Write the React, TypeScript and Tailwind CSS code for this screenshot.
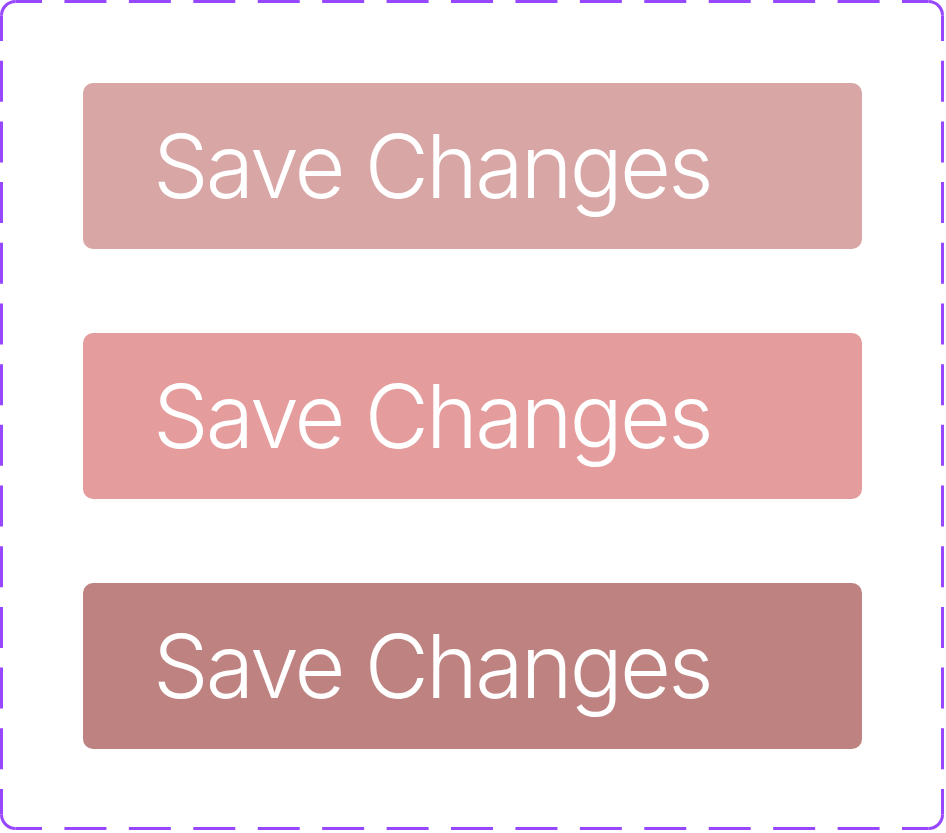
import React from "react";

const variants = [
  { label: "Save Changes", bg: "bg-[#d8a6a5]" },
  { label: "Save Changes", bg: "bg-[#e59c9c]" },
  { label: "Save Changes", bg: "bg-[#be8381]" },
];

// Figma-style dashed frame: dashes are laid out per side, corners stay solid
const L = 1.5;
const T = 1.5;
const R = 942.5;
const B = 828.5;
const r = 14;

const DashedFrame: React.FC = () => (
  <svg
    className="pointer-events-none absolute inset-0"
    width="946"
    height="833"
    viewBox="0 0 946 833"
    fill="none"
    stroke="#9747ff"
    strokeWidth="3"
  >
    {/* top / bottom */}
    <path d={`M${L + r} ${T}H${R - r}`} strokeDasharray="42 22.43" strokeDashoffset={L + r} />
    <path d={`M${L + r} ${B}H${R - r}`} strokeDasharray="42 22.43" strokeDashoffset={L + r} />
    {/* left / right */}
    <path d={`M${L} ${T + r}V${B - r}`} strokeDasharray="41 19.69" strokeDashoffset={T + r} />
    <path d={`M${R} ${T + r}V${B - r}`} strokeDasharray="41 19.69" strokeDashoffset={T + r} />
    {/* corners */}
    <path d={`M${L} ${T + r}A${r} ${r} 0 0 1 ${L + r} ${T}`} />
    <path d={`M${R - r} ${T}A${r} ${r} 0 0 1 ${R} ${T + r}`} />
    <path d={`M${R} ${B - r}A${r} ${r} 0 0 1 ${R - r} ${B}`} />
    <path d={`M${L + r} ${B}A${r} ${r} 0 0 1 ${L} ${B - r}`} />
  </svg>
);

export default function App() {
  return (
    <div className="relative h-[833px] w-[946px] bg-white">
      <DashedFrame />
      <div className="flex flex-col gap-[84px] p-[83px]">
        {variants.map((v, i) => (
          <button
            key={i}
            className={`flex h-[166px] w-[779px] items-center rounded-[10px] pl-[70px] text-left text-[88px] font-[350] leading-none tracking-[-2.75px] text-white ${v.bg}`}
            style={{ fontFamily: "Inter, 'Noto Sans', sans-serif" }}
          >
            {v.label}
          </button>
        ))}
      </div>
    </div>
  );
}
